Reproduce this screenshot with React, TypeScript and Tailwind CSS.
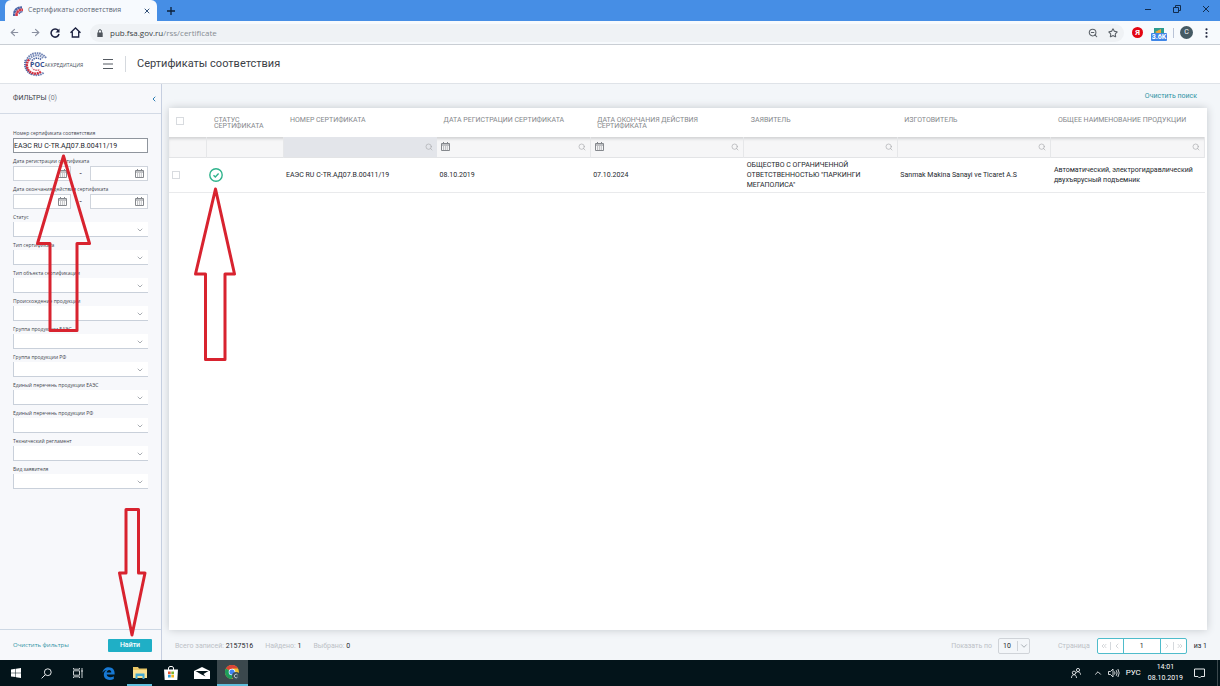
import { useState } from "react";
import type { ReactNode } from "react";
import {
  ArrowLeft,
  ArrowRight,
  ChevronDown,
  ChevronLeft,
  ChevronRight,
  ChevronUp,
  ChevronsLeft,
  ChevronsRight,
  Search,
  Star,
  X,
  ZoomOut,
} from "lucide-react";

const SELECT_FILTERS = [
  "Статус",
  "Тип сертификата",
  "Тип объекта сертификации",
  "Происхождение продукции",
  "Группа продукции ЕАЭС",
  "Группа продукции РФ",
  "Единый перечень продукции ЕАЭС",
  "Единый перечень продукции РФ",
  "Технический регламент",
  "Вид заявителя",
];

const COLUMNS = [
  { title: "Номер сертификата", date: false, active: true },
  { title: "Дата регистрации сертификата", date: true, active: false },
  { title: "Дата окончания действия сертификата", date: true, active: false },
  { title: "Заявитель", date: false, active: false },
  { title: "Изготовитель", date: false, active: false },
  { title: "Общее наименование продукции", date: false, active: false },
];

const ROW = [
  "ЕАЭС RU C-TR.АД07.В.00411/19",
  "08.10.2019",
  "07.10.2024",
  'ОБЩЕСТВО С ОГРАНИЧЕННОЙ ОТВЕТСТВЕННОСТЬЮ "ПАРКИНГИ МЕГАПОЛИСА"',
  "Sanmak Makina Sanayi ve Ticaret A.S",
  "Автоматический, электрогидравлический двухъярусный подъемник",
];

function CalendarIcon() {
  return (
    <svg className="h-[9px] w-[9px] shrink-0" viewBox="0 0 9 9" fill="none" stroke="#85888d">
      <path d="M.5 1.500h8v7h-8z" />
      <path d="M1 3h7" />
      <path d="M2.500 0v2M6.500 0v2" />
      <path d="M2 5h5M2 7h5" strokeDasharray="1 .9" />
    </svg>
  );
}

function TabStrip() {
  return (
    <div className="flex h-[21px] bg-[#468ee5] pl-[5px]">
      <div className="flex w-[152px] items-center rounded-t-md bg-[#f7fafe] pl-2 pr-1.5">
        <svg className="h-2.5 w-2.5" viewBox="0 0 10 10" fill="none">
          <path d="M1 10C1 5 3 1.500 9 1.500" stroke="#4a63a5" strokeWidth="2.400" strokeDasharray="2.600 .3" />
          <path d="M3.500 10C3.500 6 5 3.800 10 3.800" stroke="#d33c4b" strokeWidth="2.600" strokeDasharray="2.800 .3" />
          <path d="M6 8C6.500 6.500 7.500 5.800 9.500 5.600" stroke="#4a63a5" strokeWidth="1.200" />
        </svg>
        <span className="ml-[5px] flex-1 font-['Open_Sans',sans-serif] text-[7px] text-[#5a6472]">
          Сертификаты соответствия
        </span>
        <button aria-label="Закрыть вкладку">
          <X className="h-2 w-2 text-[#33527a]" strokeWidth={3} />
        </button>
      </div>
      <button aria-label="Новая вкладка" className="ml-2.5">
        <svg className="h-2 w-2" viewBox="0 0 8 8" stroke="#0d2038" strokeWidth="1.300">
          <path d="M4 0v8M0 4h8" />
        </svg>
      </button>
      <div className="ml-auto flex w-[87px] items-center justify-around pb-1">
        <button aria-label="Свернуть">
          <svg className="h-2 w-2" viewBox="0 0 8 8" stroke="#122c4d">
            <path d="M1 4.500h6" />
          </svg>
        </button>
        <button aria-label="Восстановить">
          <svg className="h-2 w-2" viewBox="0 0 8 8" fill="none" stroke="#122c4d">
            <path d="M.5 2.500h5v5h-5zM2.500 2.500v-2h5v5h-2" />
          </svg>
        </button>
        <button aria-label="Закрыть">
          <svg className="h-2 w-2" viewBox="0 0 8 8" stroke="#122c4d">
            <path d="M1 1l6 6M7 1l-6 6" />
          </svg>
        </button>
      </div>
    </div>
  );
}

function Toolbar() {
  return (
    <div className="flex h-6 items-center border-b border-[#c9ced4] bg-[#f7fafd]">
      <div className="flex w-[86px] items-center justify-around pl-1">
        <button aria-label="Назад">
          <ArrowLeft className="h-[11px] w-[11px] text-[#8a90a0]" strokeWidth={2.5} />
        </button>
        <button aria-label="Вперёд">
          <ArrowRight className="h-[11px] w-[11px] text-[#8a90a0]" strokeWidth={2.5} />
        </button>
        <button aria-label="Обновить">
          <svg className="h-2.5 w-2.5" viewBox="0 0 10 10" fill="none" stroke="#1c2140" strokeWidth="1.500">
            <path d="M8.300 2.700A4 4 0 1 0 9 6" />
            <path d="M9.500 .5v4H5.500z" fill="#1c2140" stroke="none" />
          </svg>
        </button>
        <button aria-label="Домой">
          <svg className="h-[11px] w-[11px]" viewBox="0 0 11 11" fill="none" stroke="#1c2140" strokeWidth="1.300">
            <path d="M.5 5.800L5.500 1l5 4.800M2.300 4.800v5.200h6.400V4.800" />
          </svg>
        </button>
      </div>
      <div className="ml-1 flex h-[18px] flex-1 items-center rounded-full bg-[#eff2f5] px-1.5">
        <svg className="h-2 w-2" viewBox="0 0 8 8" fill="none">
          <path d="M1.300 3.500h5.400V8H1.300z" fill="#4f555c" />
          <path d="M2.500 3.800V2.200a1.500 1.500 0 0 1 3 0v1.600" stroke="#4f555c" />
        </svg>
        <span className="ml-1.5 font-['Open_Sans',sans-serif] text-[8px] text-[#868c93]">
          <span className="text-[#3a3f45]">pub.fsa.gov.ru</span>/rss/certificate
        </span>
        <div className="ml-auto flex gap-2.5">
          <button aria-label="Масштаб">
            <ZoomOut className="h-2.5 w-2.5 text-[#5a6067]" strokeWidth={2.5} />
          </button>
          <button aria-label="В закладки">
            <Star className="h-2.5 w-2.5 text-[#5a6067]" strokeWidth={2.5} />
          </button>
        </div>
      </div>
      <div className="flex items-center pl-2">
        <button className="h-[11px] w-[11px] rounded-full bg-[#e30613] text-[8px] leading-[11px] font-bold text-white">
          Я
        </button>
        <button aria-label="Расширение" className="relative ml-2 block h-[14px] w-4">
          <svg className="mx-auto -mt-0.5 h-2 w-2.5" viewBox="0 0 10 8">
            <path d="M0 0h10v8H0z" fill="#2c9c90" />
            <path d="M1 4l6-3v6z" fill="#f0a53a" />
          </svg>
          <span className="absolute -bottom-px left-0 h-2 w-4 rounded-[1px] bg-[#3f86e8] text-center text-[7px] leading-2 font-bold text-white">
            3.6K
          </span>
        </button>
        <div className="ml-1.5 h-2.5 w-px bg-[#b9c3d6]" />
        <button className="ml-1.5 h-[13px] w-[13px] rounded-full bg-[#455a64] text-[7px] leading-[13px] text-white">
          C
        </button>
        <button aria-label="Меню" className="px-3">
          <svg className="h-2.5 w-[3px]" viewBox="0 0 3 10" fill="#22273f">
            <circle cx="1.500" cy="1.300" r="1.100" />
            <circle cx="1.500" cy="5" r="1.100" />
            <circle cx="1.500" cy="8.700" r="1.100" />
          </svg>
        </button>
      </div>
    </div>
  );
}

function SiteHeader() {
  return (
    <header className="flex h-[39px] items-center border-b border-[#dfe3e8] bg-white pl-6">
      <a href="#" className="relative flex w-[62px] items-center">
        <svg className="h-[26px] w-[26px]" viewBox="0 0 26 26" fill="none">
          <path d="M22 7A11 11 0 1 0 20 21.500" stroke="#6f83b5" strokeWidth="2" strokeDasharray="1.600 .7" />
          <path d="M1.500 9A11.500 11.500 0 0 0 8 23.500" stroke="#5870ab" strokeWidth="2" strokeDasharray="1.200 .8" />
          <path d="M19 7A8.500 8.500 0 0 0 5 9.500" stroke="#7c8fbd" strokeWidth="2" strokeDasharray="1.600 .7" />
          <path d="M5 8.500A8.500 8.500 0 0 0 17 20.500" stroke="#d0303f" strokeWidth="2.400" strokeDasharray="2 .6" />
          <path d="M8 10A6 6 0 0 0 16 18.500" stroke="#d96a78" strokeWidth="1.600" strokeDasharray="1.500 .7" />
          <path d="M17 8.500A6.500 6.500 0 0 0 8 9.500" stroke="#4e66a3" strokeWidth="1.600" strokeDasharray="1.400 .7" />
        </svg>
        <span className="absolute top-2.5 left-1.5 bg-white/60 font-['Open_Sans',sans-serif] text-[5px] leading-2 whitespace-nowrap text-[#4b525c]">
          <b className="text-[7px] text-[#34508f]">РОС</b>АККРЕДИТАЦИЯ
        </span>
      </a>
      <button aria-label="Меню сайта" className="ml-4">
        <svg className="h-3 w-3" viewBox="0 0 12 12" stroke="#555b62" strokeWidth="1.200">
          <path d="M1 1.500h10M1 6h10M1 10.500h10" />
        </svg>
      </button>
      <div className="ml-[11px] h-4 w-px bg-[#d5d9de]" />
      <h1 className="ml-[11px] text-[11px] text-[#3b4046]">Сертификаты соответствия</h1>
    </header>
  );
}

function DateInput({ label }: { label: string }) {
  return (
    <span className="flex h-[15px] w-[58px] items-center border border-[#cfd4dc] bg-white pr-[3px]">
      <input aria-label={label} className="h-full w-full min-w-0 pl-0.5 text-[8px] outline-none" />
      <CalendarIcon />
    </span>
  );
}

function DateRange({ label }: { label: string }) {
  return (
    <fieldset className="text-[8px]">
      <legend className="font-['Open_Sans',sans-serif] text-[5px] leading-[9px] text-[#3f464f]">{label}</legend>
      <div className="flex items-center justify-between leading-[15px]">
        <DateInput label={`${label}: с`} />
        <span>-</span>
        <DateInput label={`${label}: по`} />
      </div>
    </fieldset>
  );
}

function SelectFilter({ label }: { label: string }) {
  return (
    <label className="block font-['Open_Sans',sans-serif] text-[5px] leading-[9px] text-[#3f464f]">
      {label}
      <span className="grid items-center">
        <select className="col-start-1 row-start-1 h-[15px] w-full appearance-none border-b border-l border-[#c9d0da] bg-white" />
        <ChevronDown className="pointer-events-none col-start-1 row-start-1 mr-1 h-2 w-2 justify-self-end text-[#7d848c]" />
      </span>
    </label>
  );
}

function Sidebar() {
  const [number, setNumber] = useState("ЕАЭС RU C-TR.АД07.В.00411/19");

  return (
    <aside className="flex w-[162px] shrink-0 flex-col border-r border-[#c6cfe0] bg-[#f7f8fb]">
      <div className="flex h-[30px] items-center border-b border-[#d3dae5] pr-[3px] pl-[13px]">
        <h2 className="text-[7px] text-[#3a4048]">
          ФИЛЬТРЫ <span className="text-[#7d838b]">(0)</span>
        </h2>
        <button aria-label="Свернуть фильтры" className="ml-auto">
          <ChevronLeft className="h-2 w-2 text-[#2f7fb5]" strokeWidth={3} />
        </button>
      </div>
      <form className="flex flex-1 flex-col gap-1 px-[13px] pt-[15px]">
        <label className="block font-['Open_Sans',sans-serif] text-[5px] leading-[9px] text-[#3f464f]">
          Номер сертификата соответствия
          <input
            type="text"
            className="block h-[15px] w-full border border-[#8f959d] bg-white font-[Roboto,sans-serif] text-[7px] text-[#22262b] outline-none"
            value={number}
            onChange={(e) => setNumber(e.target.value)}
          />
        </label>
        <DateRange label="Дата регистрации сертификата" />
        <DateRange label="Дата окончания действия сертификата" />
        {SELECT_FILTERS.map((label) => (
          <SelectFilter key={label} label={label} />
        ))}
      </form>
      <div className="flex h-[31px] items-center justify-between border-t border-[#cdd8e4] pr-[9px] pl-[13px]">
        <a href="#" className="font-['Open_Sans',sans-serif] text-[6px] text-[#2f93a4]">
          Очистить фильтры
        </a>
        <button className="h-[13px] w-11 rounded-[1px] bg-[#1fafc6] text-[7px] font-medium text-white">
          Найти
        </button>
      </div>
    </aside>
  );
}

function Checkbox({ label }: { label: string }) {
  return (
    <input
      type="checkbox"
      aria-label={label}
      className="block h-2 w-2 appearance-none border border-[#d8dbdf] bg-white"
    />
  );
}

function CertificateTable() {
  return (
    <table className="w-full table-fixed text-left text-[7px]">
      <colgroup>
        <col className="w-[37px]" />
        <col className="w-[77px]" />
      </colgroup>
      <thead>
        <tr className="h-[29px] align-top leading-[6px] text-[#85888c] uppercase">
          <th className="pt-[9px] pl-[7px]">
            <Checkbox label="Выбрать все" />
          </th>
          <th className="pt-[9px] pl-2 font-normal">Статус сертификата</th>
          {COLUMNS.map((col) => (
            <th key={col.title} className="pt-[9px] pr-2 pl-[7px] font-normal">
              {col.title}
            </th>
          ))}
        </tr>
        <tr className="h-5 border-b border-[#e3e4e6] bg-[#f6f6f7] shadow-[inset_0_3px_3px_-1px_#d2d3d5]">
          <td className="border-r border-[#e6e7e9]" />
          <td className="border-r border-[#e6e7e9]" />
          {COLUMNS.map((col) => (
            <td
              key={col.title}
              className={col.active ? "bg-[#e3e5ea] px-1" : "border-r border-[#e6e7e9] px-1"}
            >
              <div className="flex items-center text-[#a9abae]">
                {col.date && <CalendarIcon />}
                <input aria-label={col.title} className="w-full min-w-0 outline-none" />
                <Search className="h-2 w-2 shrink-0" />
              </div>
            </td>
          ))}
        </tr>
      </thead>
      <tbody>
        <tr className="h-[35px] border-b border-[#e9eaec] leading-[10px] text-[#24282d]">
          <td className="pl-[3px]">
            <Checkbox label="Выбрать запись" />
          </td>
          <td className="pl-[3px]">
            <svg className="h-3.5 w-3.5" viewBox="0 0 14 14" fill="none" stroke="#2fb38c" strokeWidth="1.400">
              <circle cx="7" cy="7" r="6.200" />
              <path d="M4.500 7.200l1.800 1.700 3.300-3.500" />
            </svg>
          </td>
          {ROW.map((cell) => (
            <td key={cell} className="pr-1 pl-[3px]">
              {cell}
            </td>
          ))}
        </tr>
      </tbody>
    </table>
  );
}

function Counter({ label, value }: { label: string; value: number }) {
  return (
    <span>
      {label}: <span className="text-[#24282d]">{value}</span>
    </span>
  );
}

function Pagination() {
  const [page, setPage] = useState("1");

  return (
    <div className="flex h-[30px] items-center pt-0.5 pl-1.5 text-[7px] text-[#bcc1c6]">
      <div className="flex gap-3">
        <Counter label="Всего записей" value={2157516} />
        <Counter label="Найдено" value={1} />
        <Counter label="Выбрано" value={0} />
      </div>
      <label className="ml-auto flex items-center gap-1.5">
        Показать по
        <span className="grid h-4 w-8 items-center rounded-[2px] border border-[#cfd3d8]">
          <select className="col-start-1 row-start-1 h-full appearance-none bg-transparent pl-1 text-[#24282d]">
            <option>10</option>
          </select>
          <span className="pointer-events-none col-start-1 row-start-1 flex items-center justify-self-end border-l border-[#cfd3d8] pl-px">
            <ChevronDown className="h-2.5 w-2.5 text-[#9aa1a8]" />
          </span>
        </span>
      </label>
      <label htmlFor="page" className="ml-7">
        Страница
      </label>
      <div className="ml-[7px] flex h-4 items-center rounded-[2px] border border-[#4fbccb] bg-white">
        <button aria-label="Первая страница" className="px-0.5">
          <ChevronsLeft className="h-2 w-2" />
        </button>
        <button aria-label="Предыдущая страница" className="border-l border-[#d5d9dd] px-0.5">
          <ChevronLeft className="h-2 w-2" />
        </button>
        <input
          id="page"
          className="h-full w-[38px] border-x border-[#4fbccb] text-center text-[#24282d] outline-none"
          value={page}
          onChange={(e) => setPage(e.target.value)}
        />
        <button aria-label="Следующая страница" className="px-0.5">
          <ChevronRight className="h-2 w-2" />
        </button>
        <button aria-label="Последняя страница" className="border-l border-[#d5d9dd] px-0.5">
          <ChevronsRight className="h-2 w-2" />
        </button>
      </div>
      <span className="ml-[7px] text-[#24282d]">из 1</span>
    </div>
  );
}

function TaskButton({ label, className = "", children }: { label: string; className?: string; children: ReactNode }) {
  return (
    <button aria-label={label} className={`flex w-[31px] items-center justify-center ${className}`}>
      {children}
    </button>
  );
}

function Taskbar() {
  return (
    <footer className="flex h-[26px] bg-[#03141a] text-white">
      <TaskButton label="Пуск">
        <svg className="h-2.5 w-2.5" viewBox="0 0 10 10" fill="#fff">
          <path d="M0 1.500L4.500 .8v3.900H0zM5 .7L10 0v4.700H5zM0 5.200h4.500v3.900L0 8.500zM5 5.200h5V10l-5-.8z" />
        </svg>
      </TaskButton>
      <TaskButton label="Поиск">
        <svg className="h-[11px] w-[11px]" viewBox="0 0 11 11" fill="none" stroke="#e5e8ea">
          <circle cx="6.800" cy="4.200" r="3.400" />
          <path d="M4.400 6.600L.6 10.400" />
        </svg>
      </TaskButton>
      <TaskButton label="Представление задач">
        <svg className="h-2.5 w-3" viewBox="0 0 12 10" fill="none" stroke="#dfe3e5" strokeWidth=".9">
          <path d="M1.500 2.800h6v4.400h-6zM1.500 0v1.200h6V0M1.500 10V8.800h6V10M10 0v10M9 3h2" />
        </svg>
      </TaskButton>
      <TaskButton label="Edge">
        <svg className="h-[13px] w-[13px]" viewBox="0 0 13 13" fill="none">
          <path
            d="M.4 5.800C1 2.200 3.500 .2 6.700 .2c3.900 0 6 2.800 5.900 6v1.300H4.700c.1 2 1.800 2.700 3.600 2.700 1.300 0 2.500-.4 3.500-1v2.700c-1.200.7-2.600 1-4.200 1-3.600 0-5.800-2-5.800-5.100 0-2.200 1.200-3.900 3.200-4.700C3 3.400 1.300 4.200 .4 5.800zM4.700 5.400h4.600c0-1.400-.8-2.400-2.200-2.400-1.300 0-2.200.9-2.400 2.400z"
            fill="#1779d4"
          />
        </svg>
      </TaskButton>
      <TaskButton label="Проводник">
        <span className="flex h-full w-[25px] items-center justify-center border-b-2 border-[#5fbfdd] pt-0.5">
          <svg className="h-3 w-3.5" viewBox="0 0 14 12">
            <path d="M0 0h5l1 1.500h8V11H0z" fill="#e9c766" />
            <path d="M0 3h14v8H0z" fill="#f8e091" />
            <path d="M2.500 6.500h9V12H9.500V9h-5v3h-2z" fill="#43a9d4" />
          </svg>
        </span>
      </TaskButton>
      <TaskButton label="Магазин">
        <svg className="h-3.5 w-3.5" viewBox="0 0 14 14" fill="none">
          <path d="M4.500 4V2a2.500 1.600 0 0 1 5 0v2" stroke="#fff" />
          <path d="M0 3.500h14L13.300 14H.7z" fill="#fff" />
          <path d="M4 5.500h2.700v2.700H4z" fill="#e5532d" />
          <path d="M7.300 5.500H10v2.700H7.300z" fill="#7fb42c" />
          <path d="M4 8.800h2.700v2.700H4z" fill="#2a9fdc" />
          <path d="M7.300 8.800H10v2.700H7.300z" fill="#f4b41a" />
        </svg>
      </TaskButton>
      <TaskButton label="Почта">
        <svg className="h-3 w-4" viewBox="0 0 16 12">
          <path d="M0 4L8 0l8 4v8H0z" fill="#fff" />
          <path d="M1.500 4h13L9.500 7l2 2.500L7.500 7.500z" fill="#03141a" />
        </svg>
      </TaskButton>
      <TaskButton label="Chrome" className="border-b-2 border-[#5fbfdd] bg-[#3b484d]">
        <svg className="h-[15px] w-[15px]" viewBox="0 0 15 15">
          <circle cx="7" cy="7" r="7" fill="#f2c230" />
          <path d="M7 7L.9 3.500A7 7 0 0 1 13.100 3.500H7z" fill="#db4437" />
          <path d="M7 7L.9 3.500A7 7 0 0 0 6.500 14L10 8.700z" fill="#1d9c5b" />
          <circle cx="7" cy="7" r="3.300" fill="#fff" />
          <circle cx="7" cy="7" r="2.600" fill="#4285f4" />
          <circle cx="11" cy="11" r="4" fill="#3b4f59" />
          <path d="M12.500 9.900a1.800 1.800 0 1 0 0 2.200" fill="none" stroke="#dfe5e8" strokeWidth=".8" />
        </svg>
      </TaskButton>

      <div className="ml-auto flex items-center text-[8px]">
        <svg className="h-2.5 w-2.5" viewBox="0 0 10 10" fill="none" stroke="#e5e8ea" strokeWidth=".9">
          <circle cx="3" cy="4.800" r="1.700" />
          <path d="M.5 10c0-2 1-3.300 2.500-3.300S5.500 8 5.500 10" />
          <circle cx="7" cy="2" r="1.600" />
          <path d="M5 5.200c.5-1 1.200-1.500 2-1.500 1.500 0 2.500 1.200 2.500 3" />
        </svg>
        <ChevronUp className="ml-3 h-2.5 w-2.5" />
        <svg className="ml-[5px] h-2.5 w-3" viewBox="0 0 12 10" fill="none" stroke="#e5e8ea" strokeWidth=".9">
          <path d="M.5 3.500h2L5 1v8L2.500 6.500h-2zM6.500 3.500q1 1.500 0 3M8.200 2.200q1.900 2.800 0 5.600M9.900 1q2.600 4 0 8" />
        </svg>
        <span className="ml-1.5">РУС</span>
        <div className="ml-[7px] text-center text-[7px] leading-[11px]">
          14:01
          <br />
          08.10.2019
        </div>
        <svg className="ml-[11px] h-[11px] w-[11px]" viewBox="0 0 11 11" fill="none" stroke="#e5e8ea">
          <path d="M.5 1h10v7.500H7L5.500 10 4 8.500H.5z" />
        </svg>
        <div className="mr-0.5 ml-3 h-full w-px bg-[#3b484d]" />
      </div>
    </footer>
  );
}

// Hand-drawn pointers to the number field, the status icon and the search button
function Pointers() {
  return (
    <svg
      className="pointer-events-none absolute top-0 left-0 h-[660px] w-[250px]"
      viewBox="0 0 250 660"
      fill="none"
      stroke="#d8232f"
      strokeWidth="3"
      strokeLinejoin="round"
    >
      <path d="M63.500 156L89.500 243.500H77V330.500H50V243.500H37.500Z" />
      <path d="M215.500 189L234.500 274H225V359.500H205.500V274H195.500Z" />
      <path d="M126 509.500H138.500V573H145L132 635L119.500 573H126Z" />
    </svg>
  );
}

function App() {
  return (
    <div className="relative flex min-h-screen flex-col bg-[#f3f6f9] font-[Roboto,sans-serif]">
      <TabStrip />
      <Toolbar />
      <SiteHeader />
      <div className="flex flex-1">
        <Sidebar />
        <main className="flex min-w-0 flex-1 flex-col pr-[13px] pl-[7px]">
          <div className="flex h-6 items-center justify-end pr-2.5">
            <a href="#" className="text-[7px] text-[#2f93a4]">
              Очистить поиск
            </a>
          </div>
          <div className="flex-1 bg-white pr-0.5 shadow-[0_0_8px_#c4c8cc]">
            <CertificateTable />
          </div>
          <Pagination />
        </main>
      </div>
      <Taskbar />
      <Pointers />
    </div>
  );
}

export default App;
